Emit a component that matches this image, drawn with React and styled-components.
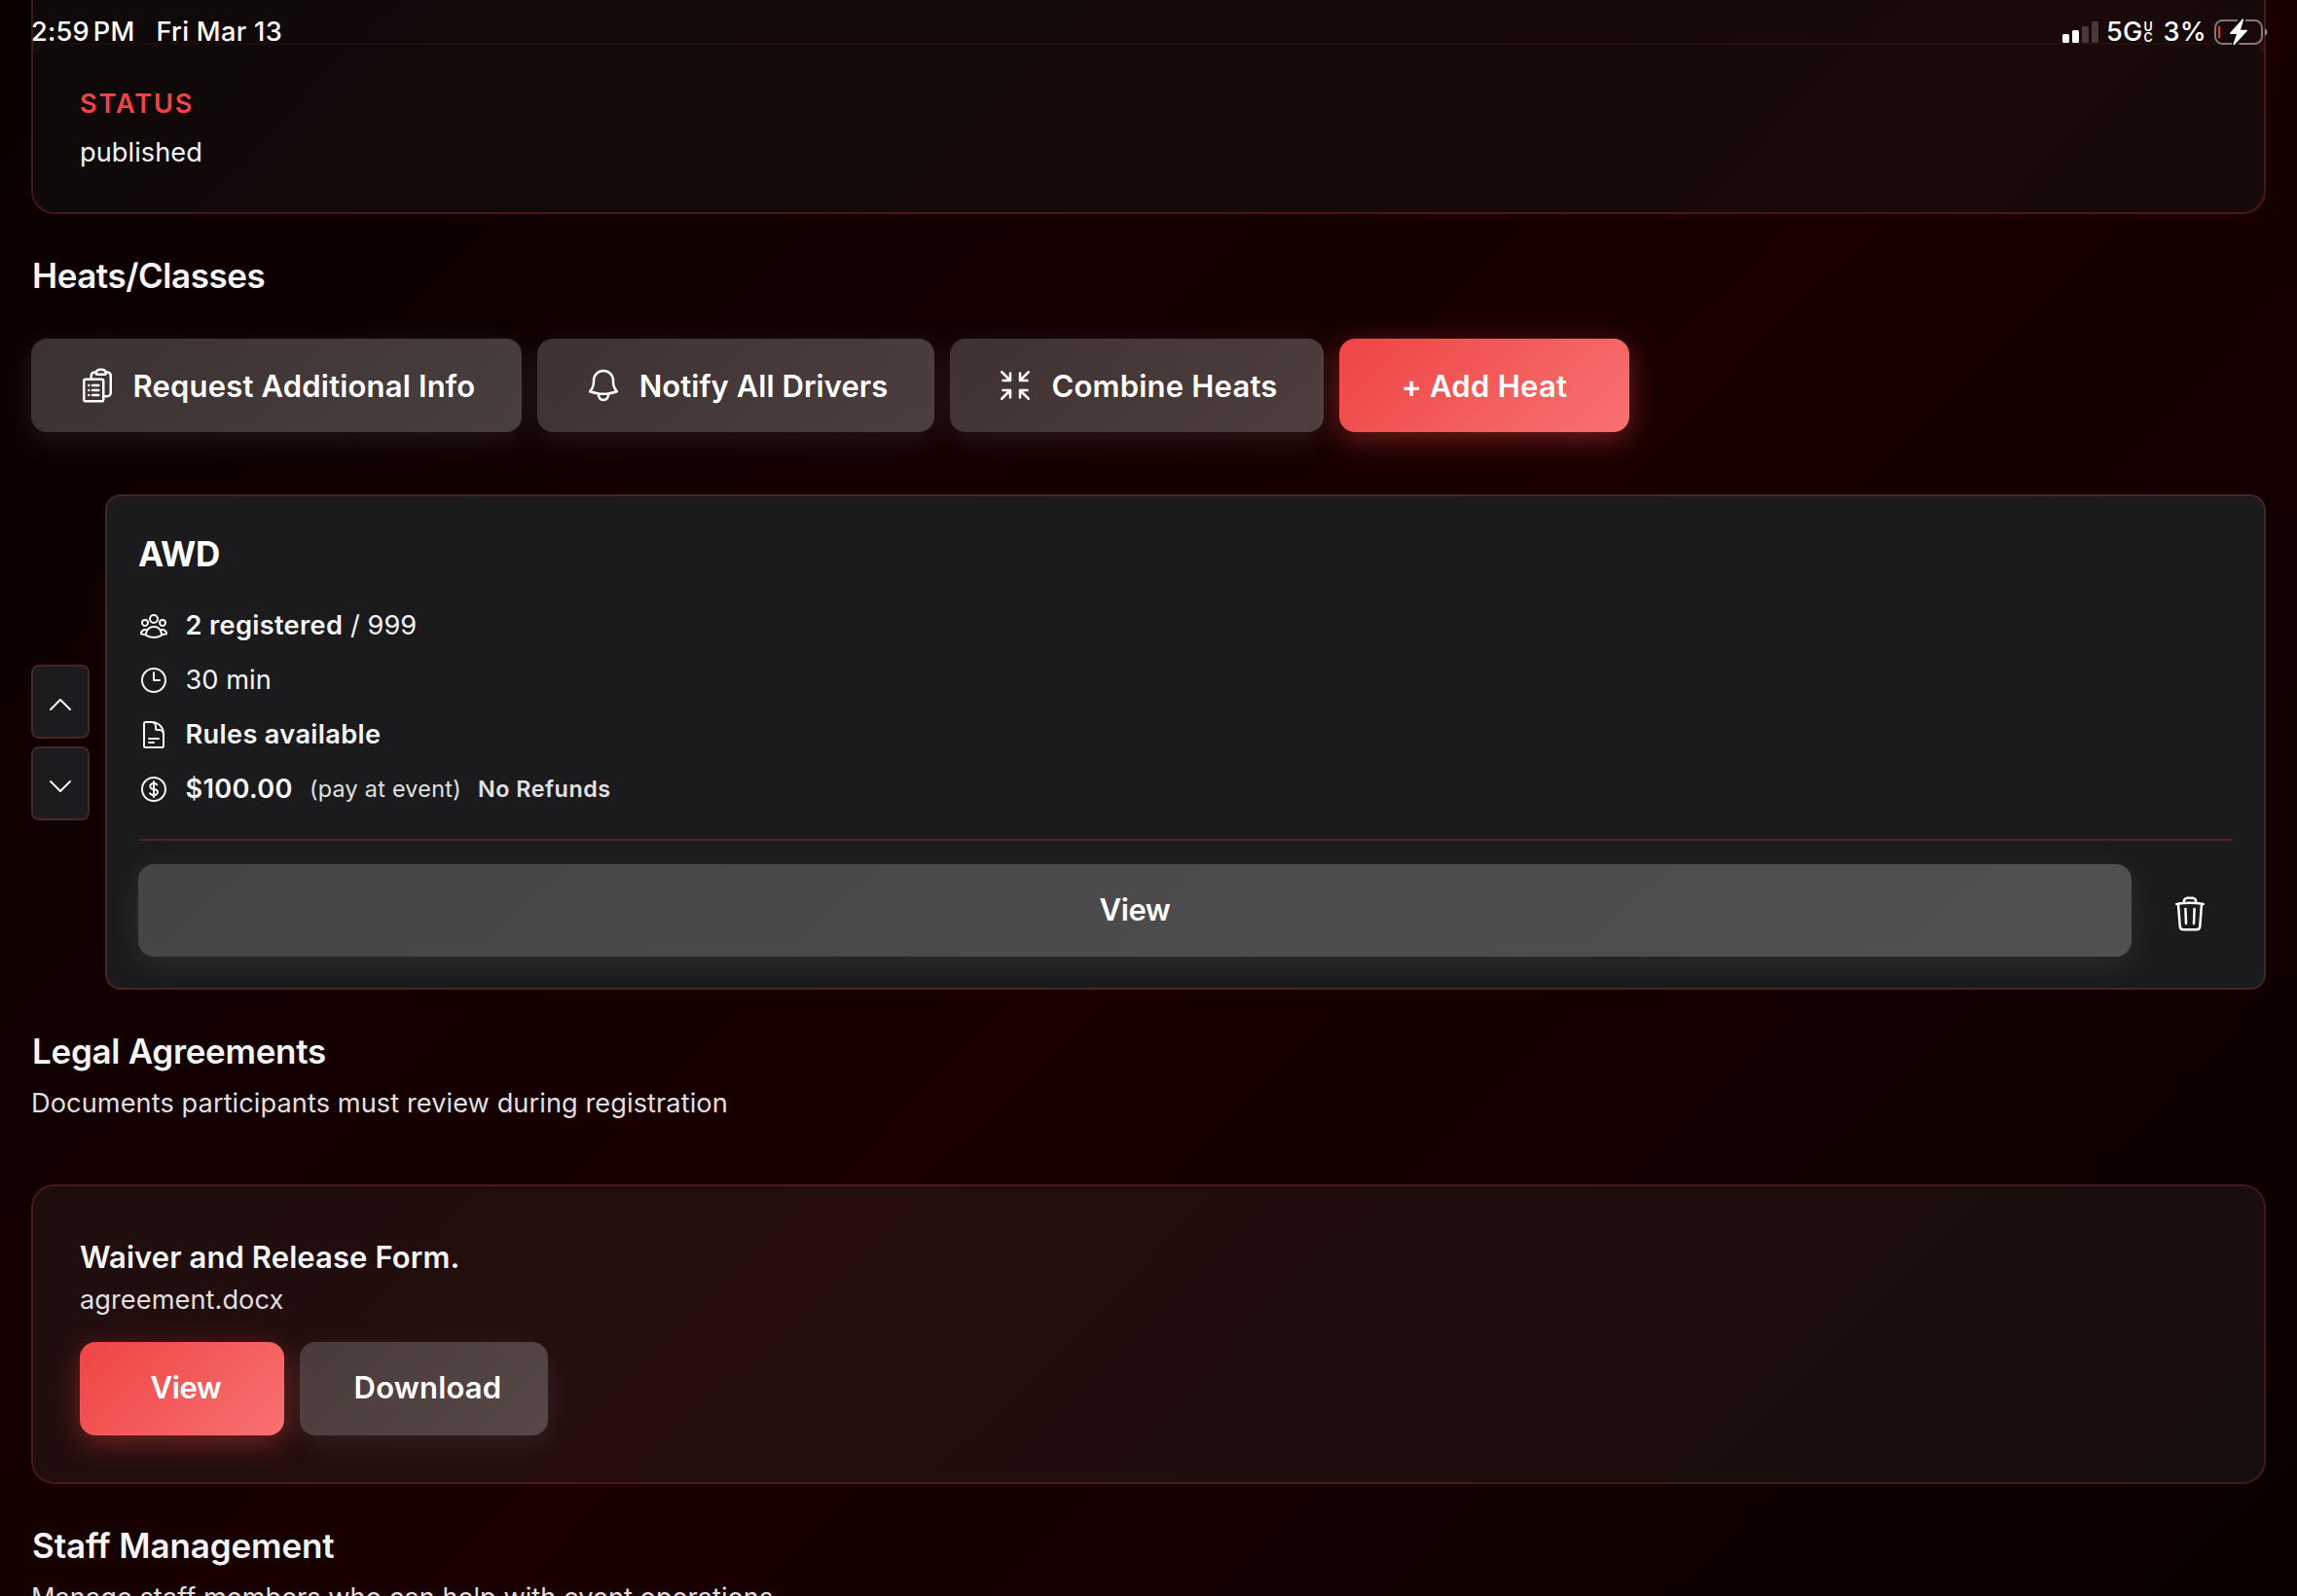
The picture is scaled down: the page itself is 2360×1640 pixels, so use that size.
import React from 'react';
import styled, { createGlobalStyle, css } from 'styled-components';
import {
  HiOutlineArrowsPointingIn,
  HiOutlineBell,
  HiOutlineChevronDown,
  HiOutlineChevronUp,
  HiOutlineClipboardDocumentList,
  HiOutlineClock,
  HiOutlineCurrencyDollar,
  HiOutlineDocumentText,
  HiOutlineTrash,
  HiOutlineUserGroup,
} from 'react-icons/hi2';

const GlobalStyle = createGlobalStyle`
  * {
    box-sizing: border-box;
  }

  body {
    margin: 0;
    background: #000;
    font-family: Inter, "Liberation Sans", sans-serif;
  }
`

const Page = styled.div`
  position: relative;
  width: 2360px;
  height: 1640px;
  padding: 0 32px;
  overflow: hidden;
  color: #f5f5f5;
  background: linear-gradient(135deg, #0a0000 0%, #1a0000 53%, #0a0000 100%);
`

/* status bar, drawn over the scrolled page */

const StatusBar = styled.div`
  position: absolute;
  top: 0;
  left: 0;
  width: 100%;
  height: 65px;
  padding: 0 30px 0 32px;
  display: flex;
  align-items: center;
  justify-content: space-between;
  color: #fff;
  font-size: 27.2px;
  font-weight: 500;
  line-height: 65px;
  letter-spacing: 0.2px;
`

const Clock = styled.div`
  display: flex;
`

const Meridiem = styled.span`
  margin-left: 4px;
`

const Today = styled.span`
  margin-left: 22px;
  letter-spacing: 0.3px;
`

const Signals = styled.div`
  display: flex;
  align-items: center;
`

const SignalIcon = styled.svg`
  margin-right: 8px;
`

const NetworkBand = styled.span`
  display: flex;
  flex-direction: column;
  width: 10px;
  margin: 0 10px 0 1px;
  font-size: 12.5px;
  font-weight: 600;
  line-height: 11px;
  letter-spacing: 0;
`

const BatteryIcon = styled.svg`
  margin-left: 7px;
`

/* cards */

const Panel = styled.section`
  border: 2px solid rgba(239, 68, 68, 0.2);
  border-radius: 24px;
  background: rgba(255, 255, 255, 0.05);
`

const DetailsPanel = styled(Panel)`
  display: flex;
  flex-direction: column;
  gap: 2px;
  height: 220px;
  border-top: 0;
  border-radius: 0 0 24px 24px;
  overflow: hidden;
`

const AgreementPanel = styled(Panel)`
  height: 308px;
  margin-top: 65px;
  padding: 48px;
`

const DetailField = styled.div`
  height: ${props => props.$height}px;
  padding: 43px 48px 0;
  border-radius: ${props => props.$radius};
  background: rgba(0, 0, 0, 0.3);
`

const FieldLabel = styled.div`
  color: #ef4444;
  font-size: 27.2px;
  font-weight: 600;
  line-height: 36px;
  letter-spacing: 1.85px;
`

const FieldValue = styled.div`
  margin-top: 14px;
  font-size: 27.2px;
  line-height: 36px;
  letter-spacing: 0.05px;
`

const SectionTitle = styled.h2`
  margin: 41px 0 0;
  padding-left: 1px;
  font-size: 35px;
  font-weight: 600;
  line-height: 44px;
  letter-spacing: ${props => props.$tracking}px;
`

const SectionNote = styled.p`
  margin: 14px 0 0;
  color: #e2dfdf;
  font-size: 27.2px;
  line-height: 36px;
  white-space: nowrap;
  letter-spacing: ${props => props.$tracking}px;
`

/* buttons */

const secondary = css`
  background: linear-gradient(135deg, rgba(190, 190, 190, 0.26), rgba(190, 190, 190, 0.33));
  box-shadow: 0 8px 30px rgba(170, 170, 175, 0.13);
`

const primary = css`
  background: linear-gradient(135deg, #ef4444, #f87171);
  box-shadow: 0 8px 30px rgba(239, 68, 68, 0.4);
`

const Button = styled.button`
  display: flex;
  align-items: center;
  justify-content: center;
  gap: 17px;
  width: ${props => props.$width}px;
  height: 96px;
  padding: 1px 0 0;
  border: 0;
  border-radius: 16px;
  color: #fff;
  font-family: inherit;
  font-size: 31px;
  font-weight: 600;
  line-height: 40px;
  letter-spacing: ${props => props.$tracking || 0}px;
  white-space: nowrap;

  svg {
    flex: none;
    width: 40px;
    height: 40px;
    margin-top: -1px;
  }

  ${props => (props.$primary ? primary : secondary)}
`

const AgreementButton = styled(Button)`
  padding: 0 0 2px 8px;
`

const ButtonRow = styled.div`
  display: flex;
  gap: 16px;
  margin-top: ${props => props.$top}px;
`

/* heats */

const HeatItem = styled.div`
  display: flex;
  align-items: center;
  gap: 16px;
  margin-top: 64px;
`

const OrderButtons = styled.div`
  display: flex;
  flex-direction: column;
  gap: 8px;
`

const OrderButton = styled.button`
  display: flex;
  align-items: center;
  justify-content: center;
  width: 60px;
  height: 76px;
  padding: 7px 0 0;
  color: #f5f5f5;
  background: #1c1c1e;
  border: 2px solid #46242a;
  border-radius: 8px;
`

const HeatCard = styled.article`
  flex: 1;
  height: 509px;
  padding: 32px;
  background: #1b1b1d;
  border: 2px solid #46242a;
  border-radius: 16px;
`

const HeatName = styled.h3`
  margin: 0 0 30px;
  color: #fff;
  font-size: 35px;
  font-weight: 700;
  line-height: 55px;
  letter-spacing: -0.5px;
`

const HeatFacts = styled.div`
  display: flex;
  flex-direction: column;
  gap: 24px;
`

const HeatFact = styled.div`
  display: flex;
  align-items: center;
  height: 32px;
  font-size: 27.2px;
  line-height: 32px;
  letter-spacing: 0.05px;
  white-space: pre;

  svg {
    margin-right: 16.5px;
  }

  b {
    font-weight: 600;
    letter-spacing: 0.33px;
  }
`

const PriceNote = styled.span`
  margin-left: 17px;
  color: #e2e2e3;
  font-size: 23.3px;
  font-weight: ${props => (props.$bold ? 600 : 400)};
  letter-spacing: ${props => (props.$bold ? 0.53 : 0.3)}px;
`

const HeatActions = styled.div`
  display: flex;
  align-items: flex-start;
  gap: 16px;
  margin-top: 35px;
  padding-top: 24px;
  border-top: 2px solid #46242a;
`

const ViewHeat = styled(Button)`
  flex: 1;
  height: 95px;
  padding: 0 0 1px;
`

const DeleteHeat = styled.button`
  display: flex;
  align-items: center;
  justify-content: center;
  width: 88px;
  height: 95px;
  padding: 6px 0 0;
  color: #fff;
  background: none;
  border: 0;
`

/* agreements */

const AgreementName = styled.div`
  font-size: 31px;
  font-weight: 600;
  line-height: 50px;
  letter-spacing: 0.09px;
`

const FileName = styled.div`
  padding-top: 1px;
  color: #e2dfdf;
  font-size: 27.2px;
  line-height: 36px;
  letter-spacing: 0.05px;
`

const Signal = () => (
  <SignalIcon width="37" height="22" viewBox="0 0 37 22" fill="#fff">
    <rect x="0" y="13" width="7" height="9" rx="1.5" />
    <rect x="10" y="9" width="7" height="13" rx="1.5" />
    <rect x="20" y="5" width="7" height="17" rx="1.5" opacity="0.2" />
    <rect x="30" y="0" width="7" height="22" rx="1.5" opacity="0.2" />
  </SignalIcon>
);

const Battery = () => (
  <BatteryIcon width="56" height="28" viewBox="0 0 56 28" fill="none">
    <path
      d="M25 2H9.5A7.500 7.500 0 0 0 2 9.500v9A7.500 7.500 0 0 0 9.500 26H19M33 2h9.500A7.500 7.500 0 0 1 50 9.500v9a7.500 7.500 0 0 1-7.500 7.500H26.500"
      stroke="#fff"
      strokeOpacity="0.45"
      strokeWidth="2"
    />
    <path d="M53 10.500c1.700.6 2.500 2 2.500 3.500s-.8 2.900-2.500 3.500z" fill="#fff" fillOpacity="0.5" />
    <rect x="5" y="8" width="2" height="12" fill="#ff3030" />
    <path d="M29.800.8 17.200 14.800c-.5.600-.2 1.200.5 1.200h6.300l-3.500 10.200c-.3 1 .6 1.500 1.300.8l12.900-14c.5-.6.200-1.200-.5-1.200h-6.300l3.200-10.200c.3-1-.6-1.500-1.300-.8z" fill="#fff" />
  </BatteryIcon>
);

const App = () => (
  <Page>
    <GlobalStyle />

    <DetailsPanel>
      <DetailField $height={44} $radius="0 0 16px 16px" />
      <DetailField $height={172} $radius="16px 16px 0 0">
        <FieldLabel>STATUS</FieldLabel>
        <FieldValue>published</FieldValue>
      </DetailField>
    </DetailsPanel>

    <SectionTitle $tracking={-0.46}>Heats/Classes</SectionTitle>
    <ButtonRow $top={43}>
      <Button $width={504} $tracking={0.17}><HiOutlineClipboardDocumentList />Request Additional Info</Button>
      <Button $width={408} $tracking={0.05}><HiOutlineBell />Notify All Drivers</Button>
      <Button $width={384} $tracking={0.2}><HiOutlineArrowsPointingIn />Combine Heats</Button>
      <Button $width={298} $tracking={0.27} $primary>+ Add Heat</Button>
    </ButtonRow>

    <HeatItem>
      <OrderButtons>
        <OrderButton><HiOutlineChevronUp size={32} /></OrderButton>
        <OrderButton><HiOutlineChevronDown size={32} /></OrderButton>
      </OrderButtons>
      <HeatCard>
        <HeatName>AWD</HeatName>
        <HeatFacts>
          <HeatFact><HiOutlineUserGroup size={32} /><b>2 registered</b> / 999</HeatFact>
          <HeatFact><HiOutlineClock size={32} />30 min</HeatFact>
          <HeatFact><HiOutlineDocumentText size={32} /><b>Rules available</b></HeatFact>
          <HeatFact>
            <HiOutlineCurrencyDollar size={32} />
            <b>$100.00</b>
            <PriceNote>(pay at event)</PriceNote>
            <PriceNote $bold>No Refunds</PriceNote>
          </HeatFact>
        </HeatFacts>
        <HeatActions>
          <ViewHeat $tracking={-0.4}>View</ViewHeat>
          <DeleteHeat><HiOutlineTrash size={40} /></DeleteHeat>
        </HeatActions>
      </HeatCard>
    </HeatItem>

    <SectionTitle $tracking={-0.3}>Legal Agreements</SectionTitle>
    <SectionNote $tracking={0.07}>Documents participants must review during registration</SectionNote>
    <AgreementPanel>
      <AgreementName>Waiver and Release Form.</AgreementName>
      <FileName>agreement.docx</FileName>
      <ButtonRow $top={25}>
        <AgreementButton $width={210} $tracking={-0.4} $primary>View</AgreementButton>
        <AgreementButton $width={255} $tracking={0.2}>Download</AgreementButton>
      </ButtonRow>
    </AgreementPanel>

    <SectionTitle $tracking={-0.12}>Staff Management</SectionTitle>
    <SectionNote $tracking={0.02}>Manage staff members who can help with event operations</SectionNote>

    <StatusBar>
      <Clock>
        2:59<Meridiem>PM</Meridiem><Today>Fri Mar 13</Today>
      </Clock>
      <Signals>
        <Signal />
        5G
        <NetworkBand><span>U</span><span>C</span></NetworkBand>
        3%
        <Battery />
      </Signals>
    </StatusBar>
  </Page>
);

export default App;
